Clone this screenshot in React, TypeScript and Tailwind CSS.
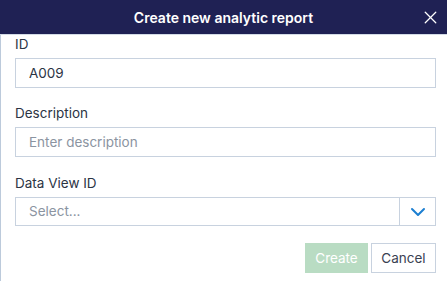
import { X, ChevronDown } from 'lucide-react'

function Field({ label, children, className = '' }: { label: string; children: React.ReactNode; className?: string }) {
  return (
    <div className={`flex flex-col ${className}`}>
      <label className="h-[16px] text-[13.5px] leading-[16px] text-[#2c3444]">{label}</label>
      <div className="mt-[6px]">{children}</div>
    </div>
  )
}

export default function App() {
  return (
    <div className="w-[447px] h-[281px] bg-white overflow-hidden font-['Inter',sans-serif]">
      <div className="relative h-[35px] bg-[#1f2154] flex items-center justify-center border-b border-[#d3dbe6]">
        <h1 className="text-[14px] font-semibold text-white">Create new analytic report</h1>
        <button className="absolute right-[6px] top-[7px] text-white">
          <X size={21} strokeWidth={1.5} />
        </button>
      </div>
      <div className="h-[246px] border-l border-[#bccadb] pl-[14px] pr-[11px] pt-[1px]">
        <Field label="ID">
          <input
            defaultValue="A009"
            className="w-full h-[30px] border border-[#c8d2df] px-[13px] text-[13.5px] text-[#2c3444] outline-none"
          />
        </Field>
        <Field label="Description" className="mt-[17px]">
          <input
            placeholder="Enter description"
            className="w-full h-[30px] border border-[#c8d2df] px-[13px] text-[13.5px] text-[#2c3444] placeholder:text-[#8b94a1] outline-none"
          />
        </Field>
        <Field label="Data View ID" className="mt-[18px]">
          <div className="flex h-[29px] border border-[#c8d2df]">
            <div className="flex-1 flex items-center px-[13px] text-[13.5px] text-[#8b94a1]">Select...</div>
            <div className="w-[36px] flex items-center justify-center border-l border-[#c8d2df] text-[#1c7fd1]">
              <ChevronDown size={24} strokeWidth={2} />
            </div>
          </div>
        </Field>
        <div className="mt-[17px] flex justify-end gap-[3px]">
          <button className="w-[63px] h-[30px] bg-[#b9dcc3] text-white text-[13.5px]">Create</button>
          <button className="w-[65px] h-[30px] border border-[#c8d2df] bg-white text-[#3a4152] text-[13.5px]">Cancel</button>
        </div>
      </div>
    </div>
  )
}
